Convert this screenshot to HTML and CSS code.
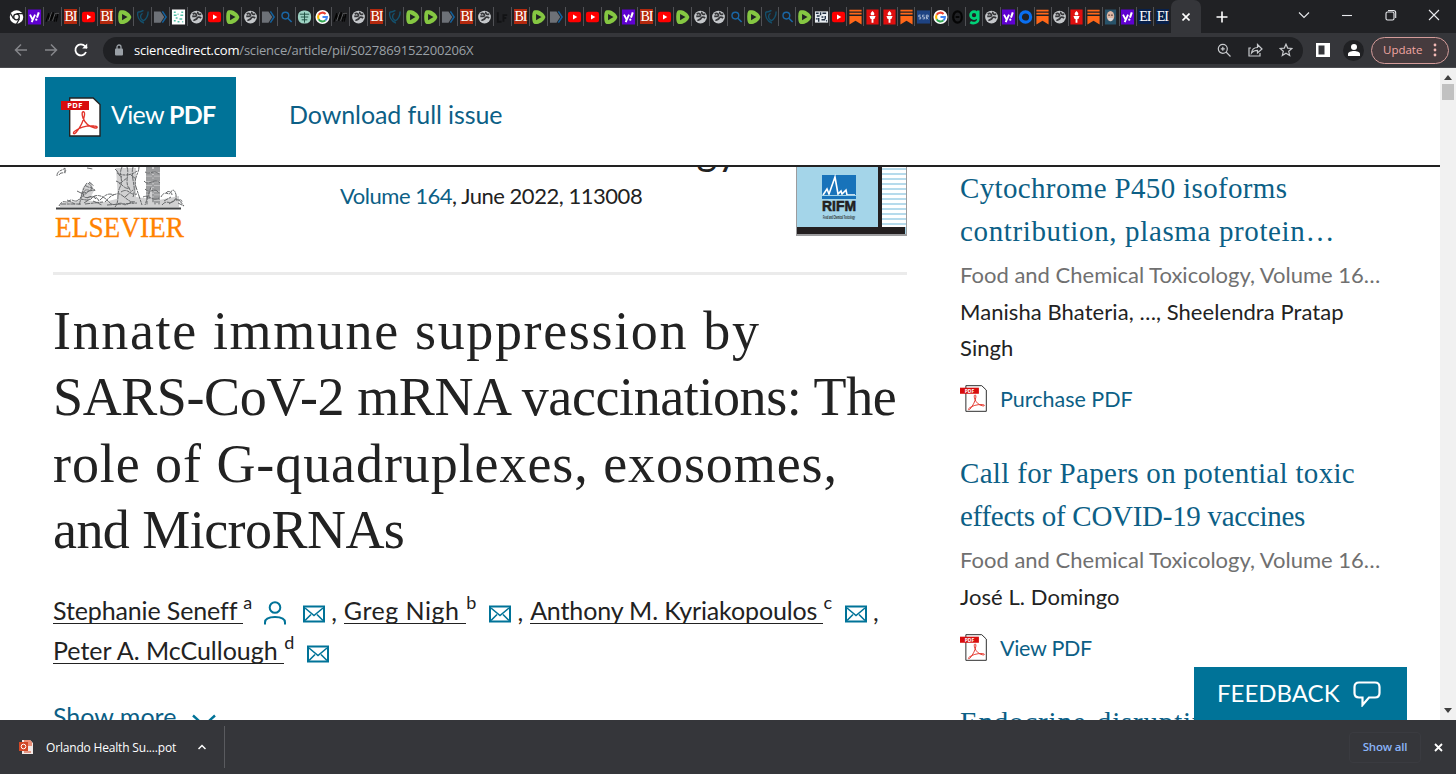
FILE: index.html
```html
<!DOCTYPE html>
<html lang="en">
<head>
  <meta charset="UTF-8" />
  <title>Innate immune suppression by SARS-CoV-2 mRNA vaccinations</title>
  <link rel="stylesheet" href="styles.css">
</head>
<body>
  <!-- shared icons -->
  <svg class="sprite" width="0" height="0">
    <symbol id="chrome" viewBox="0 0 16 16"><circle cx="8" cy="8" r="7.2" fill="#fff"/><circle cx="8" cy="8" r="3" fill="#fff" stroke="#202124" stroke-width="1.4"/><path d="M8 4.3h7M4.8 9.8L1.6 4.2M11.2 9.8L8 15.4" stroke="#202124" stroke-width="1.3"/></symbol>
    <symbol id="yahoo" viewBox="0 0 16 16"><rect x="1" width="14" height="16" fill="#5f01d1"/><path d="M3.2 5.5l2.600 5M8.600 5.5L5 13.4" stroke="#fff" stroke-width="2"/><path d="M12.600 3l-2 5.600" stroke="#fff" stroke-width="2.200"/><circle cx="9.900" cy="10.800" r="1.200" fill="#fff"/></symbol>
    <symbol id="script" viewBox="0 0 16 16"><path d="M1 13L4 4v7l3-8-1 9 3-9-1 9 4-9-2 5h4M11 8l-1 5M14 3l-2 10" fill="none" stroke="#050505" stroke-width="1.3"/><path d="M4 12l3-9M8 12l3-8h4" stroke="#77787b" stroke-width=".8" fill="none"/></symbol>
    <symbol id="youtube" viewBox="0 0 16 16"><rect x="1" y="2.5" width="14" height="11" rx="2.4" fill="#f00"/><path d="M6.4 5.4v5.2L11 8z" fill="#fff"/></symbol>
    <symbol id="rumble" viewBox="0 0 16 16"><path d="M4 .7h2.500c4 .5 8.300 4.300 8.800 7.300-.7 3.500-4.800 6.900-8.800 7.400H4C2 15.200 1.300 12 1.300 8S2 .9 4 .7z" fill="#85c742"/><path d="M5.400 4.800v6.600L11.200 8z" fill="#202124"/></symbol>
    <symbol id="shield" viewBox="0 0 16 16"><path d="M3 2.600c2 .4 4-.2 6-1.600M3 2.600C2 7 4 12 9.500 14.500M8 4c-3 2-3 6 1 8 3-2 5-5 5-10" fill="none" stroke="#14506c" stroke-width="1.500"/></symbol>
    <symbol id="arrow" viewBox="0 0 16 16"><path d="M1 2h7l4 6-4 6H1z" fill="#6d7177"/><path d="M10 2l4 6-4 6" fill="none" stroke="#12619e" stroke-width="1.600"/></symbol>
    <symbol id="dots" viewBox="0 0 16 16"><rect x="1" width="14" height="16" fill="#fff"/><path d="M3 3h2M7 5h1M11 3h2M3 6h3M10 6h3M5 9h2M9 10h3M3 12h2M7 13h2M12 13h1" stroke="#52bfa6" stroke-width="1.600"/></symbol>
    <symbol id="globe" viewBox="0 0 16 16"><circle cx="8" cy="8" r="6.800" fill="#c4c7ca"/><path d="M4 5c2-1.500 4-.5 4 1s-2 1.500-4.500 1.200M9.500 2.500c-1 2 1.500 3 3.500 2.500M13 9c-2-1.500-4-1-4.500.5s-3 1-3.500 2.500" fill="none" stroke="#36373a" stroke-width="1.900"/></symbol>
    <symbol id="search" viewBox="0 0 16 16"><circle cx="6.800" cy="6.500" r="3.600" fill="none" stroke="#1a66a5" stroke-width="1.500"/><path d="M9.500 9.300l4 4" stroke="#1a66a5" stroke-width="1.700"/></symbol>
    <symbol id="tree" viewBox="0 0 16 16"><rect x="1" y="1" width="14" height="14" rx="6" fill="#9ed4c4"/><path d="M8 3v11M3 5h10M4 8h8M5 11h6" stroke="#1d4d3e" stroke-width="1"/></symbol>
    <symbol id="google" viewBox="0 0 16 16"><circle cx="8" cy="8" r="7.500" fill="#fff"/><g fill="none" stroke-width="2.200"><path d="M3.900 5.700A4.700 4.700 0 0 1 11.300 4.700" stroke="#ea4335"/><path d="M3.900 5.700a4.700 4.700 0 0 0 0 4.600" stroke="#fbbc05"/><path d="M3.900 10.300a4.700 4.700 0 0 0 7.300 1.200" stroke="#34a853"/><path d="M11.200 11.500A4.700 4.700 0 0 0 12.700 8H8" stroke="#4285f4"/></g></symbol>
    <symbol id="dark" viewBox="0 0 16 16"><path d="M3 3v10h4M9 13V6h4M9 9h3" stroke="#121315" stroke-width="2" fill="none"/></symbol>
    <symbol id="grid" viewBox="0 0 16 16"><rect x="1" y="2" width="14" height="12" fill="#e8edf1"/><path d="M2 4h3M7 3v3M9 4h4M3 7h3M8 8h2M12 7v3M2 10h2M5 9v4M8 11h4M13 12h1" stroke="#202f42" stroke-width="1.500"/></symbol>
    <symbol id="substack" viewBox="0 0 16 16"><path d="M1.500 1.300h13M1.500 4.500h13" stroke="#ff6719" stroke-width="1.900"/><path d="M1.500 7h13v9L8 12l-6.500 4z" fill="#ff6719"/></symbol>
    <symbol id="torch" viewBox="0 0 16 16"><rect x="1.500" width="13" height="16" fill="#e00f0f"/><path d="M8 1.500c2 2 2.500 3 1.500 4.700h-3C5.500 4.500 6 3.500 8 1.500zM4.700 7h6.600L10 10H9v4H7v-4H6z" fill="#fff"/></symbol>
    <symbol id="ssr" viewBox="0 0 16 16"><rect x="1" y="1" width="14" height="14" fill="#1e4382"/><path d="M5 6H3v2h2v2H3M9 6H7v2h2v2H7M11 10.500V6h2v2h-2l2 2.500" fill="none" stroke="#c6d2e5" stroke-width=".8"/></symbol>
    <symbol id="theta" viewBox="0 0 16 16"><ellipse cx="8" cy="8" rx="4.600" ry="6" fill="none" stroke="#050505" stroke-width="2.400"/><path d="M6 8h4" stroke="#050505" stroke-width="2"/></symbol>
    <symbol id="gab" viewBox="0 0 16 16"><circle cx="7.500" cy="6" r="3.700" fill="none" stroke="#00d178" stroke-width="2.800"/><path d="M12 1v9.500c0 4-5.500 5-8.500 3" fill="none" stroke="#00d178" stroke-width="2.700"/></symbol>
    <symbol id="ring" viewBox="0 0 16 16"><circle cx="8" cy="8" r="5.500" fill="none" stroke="#0a6ff0" stroke-width="3.300"/></symbol>
    <symbol id="face" viewBox="0 0 16 16"><rect x="2" width="12" height="16" fill="#28536a"/><ellipse cx="8" cy="7" rx="4" ry="5.500" fill="#dcb6a4"/><path d="M5 9q3 7 6 0" fill="#d8d8d8"/><path d="M5.500 6h2M8.500 6h2" stroke="#3b2b26"/></symbol>
    <symbol id="pdf" viewBox="0 0 40 40"><path d="M8.700 1h23.500L39 7.500V39H8.700z" fill="#fff" stroke="#222" stroke-width="1.400"/><rect y="4" width="28" height="9" fill="#d80d0d"/><path d="M23 15c-2-1-2.500 2-1 6 2 5 6 9 12 10 3 .5 3-2-1-2-8-.5-15 2-19 5-3 2-1 4 1 1.500C19 31 23 23 23.500 18c.2-1.500 0-2.700-.5-3z" fill="none" stroke="#e3342b" stroke-width="1.400"/></symbol>
    <symbol id="mail" viewBox="0 0 22 18"><path d="M1 1.500h20v15H1z" fill="none" stroke="#007398" stroke-width="2"/><path d="M2 3l9 7.500L20 3M2 15.500l6-6M20 15.500l-6-6" fill="none" stroke="#007398" stroke-width="1.600"/></symbol>
  </svg>

  <div class="tab-strip">
    <div class="tabs" id="tabs"></div>
    <div class="tab-active"><svg width="8" height="8" viewBox="0 0 8 8"><path d="M.5.500l7 7M7.500.500l-7 7"/></svg></div>
    <svg class="new-tab" width="12" height="12" viewBox="0 0 12 12"><path d="M6 .5v11M.5 6h11"/></svg>
    <div class="window-buttons">
      <svg width="12" height="12" viewBox="0 0 12 12"><path d="M1 3.500l5 5 5-5"/></svg>
      <svg width="12" height="12" viewBox="0 0 12 12"><path d="M1 6.500h10"/></svg>
      <svg width="12" height="12" viewBox="0 0 12 12"><rect x="1" y="3" width="8" height="8" rx="1.500"/><path d="M3 1.500h5.500a2.200 2.200 0 0 1 2.200 2.200V9"/></svg>
      <svg width="12" height="12" viewBox="0 0 12 12"><path d="M1 1l10 10M11 1L1 11"/></svg>
    </div>
  </div>

  <div class="toolbar">
    <div class="nav-buttons">
      <svg class="dim" width="14" height="14" viewBox="0 0 14 14"><path d="M13 7H2M7 1.500L1.500 7 7 12.500"/></svg>
      <svg class="dim" width="14" height="14" viewBox="0 0 14 14"><path d="M1 7h11M7 1.500L12.500 7 7 12.500"/></svg>
      <svg class="reload" width="14" height="14" viewBox="0 0 14 14"><path d="M12 9A5.500 5.500 0 1 1 11 3.200L13 5"/><path d="M13.200.500v5H8.200z" fill="#fff" stroke="none"/></svg>
    </div>
    <div class="omnibox">
      <svg class="lock" width="10" height="12" viewBox="0 0 10 12"><rect x="1" y="4.500" width="8" height="7" rx="1" fill="#9aa0a6"/><path d="M3 5V3a2 2 0 0 1 4 0v2" fill="none" stroke="#9aa0a6" stroke-width="1.300"/></svg>
      <span class="url"><b>sciencedirect.com</b>/science/article/pii/S027869152200206X</span>
      <div class="omnibox-icons">
        <svg width="14" height="14" viewBox="0 0 14 14"><circle cx="5.800" cy="5.800" r="4.500"/><path d="M9 9l4.500 4.500M3.800 5.800h4M5.800 3.800v4"/></svg>
        <svg width="15" height="14" viewBox="0 0 15 14"><path d="M3 5H1v8h11v-3"/><path d="M3.500 10C4 6 6.500 4.500 9.500 4.500V1.500L14 6 9.500 10V7.300C7 7.300 5 8 3.500 10z"/></svg>
        <svg width="14" height="14" viewBox="0 0 14 14"><path d="M7 1.200l1.700 3.900 4.200.4-3.200 2.800 1 4.200L7 10.300l-3.700 2.200 1-4.200L1.100 5.500l4.200-.4z"/></svg>
      </div>
    </div>
    <svg class="side-panel" width="14" height="14" viewBox="0 0 14 14"><path d="M0 0h14v14H0zM2.500 2.500v9h6v-9z" fill="#fff" fill-rule="evenodd"/></svg>
    <div class="avatar"><svg width="14" height="14" viewBox="0 0 14 14"><circle cx="7" cy="4" r="3" fill="#fff"/><path d="M1 13V11c0-2 3-3 6-3s6 1 6 3v2z" fill="#fff"/></svg></div>
    <div class="update"><span>Update</span><svg width="4" height="14" viewBox="0 0 4 14" fill="#f2b8b5"><circle cx="2" cy="2" r="1.400"/><circle cx="2" cy="7" r="1.400"/><circle cx="2" cy="12" r="1.400"/></svg></div>
  </div>

  <div class="viewport">
    <div class="page">
      <div class="page-header">
        <a class="view-pdf"><div class="pdf-icon large"><svg width="40" height="40"><use href="#pdf"/></svg><em>PDF</em></div><span>View <b>PDF</b></span></a>
        <a class="download">Download full issue</a>
      </div>

      <div class="page-body">
        <article class="article">
          <div class="journal">
            <svg class="elsevier" width="132" height="74" viewBox="0 0 132 74">
              <g fill="#66686a" opacity=".3"><path d="M91 0h14v37H91zM61 1h20v32H63zM28 20l8-5 3 9-7 12-8-2zM5 36l22-3 22 2 25-6 30 4 20-4v11H5z"/></g>
              <g fill="none" stroke="#66686a" stroke-width="1" stroke-dasharray="5 .8 3 .6">
                <path d="M2 9c0-6 5-5 8-8M4 8c2-4 5 0 7-5M10 1v6M32 1l6 1"/>
                <path d="M67 0c-4 8 2 12-2 20s0 14-5 20M72 0c3 8-4 16 4 24M78 0c-3 10 4 20 0 30M84 0c0 6-6 12-3 20l6 18M62 6c5 3 14 3 20-2M61 14c6 2 8 9 14 7M66 25c8-5 8 4 16 2M60 2c4 3 3 7 7 8M64 17l8-6M70 30l8-7M76 8l5 4"/>
                <path d="M24 38c3-8 2-14 8-22 4 1 6 5 3 8-4-3-8 0-6 6 4 2 9-2 12 2M26 26c4 1 8-3 14-3M30 18c4 4 8 1 10 6M32 31c4-3 10-2 12 3M22 24l6 3M25 31l8-6M34 15l5 4M29 36l6-4"/>
                <path d="M4 39c4-8 7-2 10-5s6 2 9-1 10 3 14-2 12-2 17 4 10-1 14 2 8-4 12-2M50 35c4-5 9-9 15-8 5 3 8 7 14 9M45 33c6-6 9-7 14-5M6 37h20M30 37l18-2M52 38l30-2M12 33l8 4M38 34l9 4"/>
                <path d="M92 0v38M94 0v32M96 0v20l-6 18M98 2v34M100 0v38M102 0v36M104 0v38M90 5c6 3 8-3 14 2M89 14c5 6 10-4 16 2M90 22c6 6 9-3 14 4M88 30c6-3 9 5 16 1"/>
                <path d="M106 30c4-8 8 0 10-5s6 1 5 6 6-1 6 4M107 38c5-6 7 0 12-4s7 2 10 5M111 26c2-3 6-1 6 2M123 36l6 3M109 34l7-4M114 37l8-6"/>
              </g>
              <path d="M1 41.500h125" stroke="#3f4143" stroke-width="2"/>
              <text x="0" y="69.500" textLength="129" lengthAdjust="spacingAndGlyphs" font-family="Liberation Serif" font-size="30" fill="#ff8200" stroke="#ff8200" stroke-width=".3">ELSEVIER</text>
            </svg>
            <div class="issue">
              <div class="journal-name">gy</div>
              <div class="volume"><a>Volume 164</a>, June 2022, 113008</div>
            </div>
            <svg class="cover" width="111" height="70" viewBox="0 0 111 70">
              <rect width="111" height="70" fill="#9c9c9e"/>
              <rect x="1" width="109" height="68" fill="#a4d5e9"/>
              <path d="M86 0h24v61H86z" fill="#fff"/>
              <path d="M86 3h24M86 8h24M86 13h24M86 18h24M86 23h24M86 28h24M86 33h24M86 38h24M86 43h24M86 48h24M86 53h24M86 58h24" stroke="#9fd0e6" stroke-width="1.600"/>
              <path d="M82 0h4v61h-4zM1 61h108v7H1z" fill="#231f20"/>
              <rect x="26" y="9" width="34" height="24" fill="#1873ba"/>
              <path d="M27 29l4-6 2 5 6-17 3 17 3-3 1 3 4-4 1 5h8" fill="none" stroke="#fff" stroke-width="1.600"/>
              <path d="M26 29.500h34" stroke="#a4d5e9" stroke-width="1"/>
              <text x="26" y="45" textLength="34" lengthAdjust="spacingAndGlyphs" font-family="Liberation Sans" font-size="15.500" font-weight="bold" fill="#231f20" stroke="#231f20" stroke-width=".6">RIFM</text>
              <text x="27" y="53" textLength="32" lengthAdjust="spacingAndGlyphs" font-family="Liberation Sans" font-size="4.500" font-weight="bold" fill="#231f20">Food and Chemical Toxicology</text>
            </svg>
          </div>

          <h1>
            <span class="t1">Innate immune suppression by</span>
            <span class="t2">SARS-CoV-2 mRNA vaccinations: The</span>
            <span class="t3">role of G-quadruplexes, exosomes,</span>
            <span class="t4">and MicroRNAs</span>
          </h1>

          <div class="authors">
            <div class="author-line">
              <a class="a1">Stephanie Seneff&nbsp;</a><sup>a</sup>
              <svg class="person" width="22" height="24" viewBox="0 0 22 24"><circle cx="11" cy="6.500" r="5.300"/><path d="M1 23.500v-2c0-3.500 4-5.500 10-5.500s10 2 10 5.500v2"/></svg>
              <svg class="mail" width="22" height="18"><use href="#mail"/></svg><i>,</i>
              <a class="a2">Greg Nigh&nbsp;</a><sup>b</sup>
              <svg class="mail near" width="22" height="18"><use href="#mail"/></svg><i>,</i>
              <a class="a3">Anthony M. Kyriakopoulos&nbsp;</a><sup>c</sup>
              <svg class="mail near" width="22" height="18"><use href="#mail"/></svg><i>,</i>
            </div>
            <div class="author-line">
              <a class="a4">Peter A. McCullough&nbsp;</a><sup>d</sup>
              <svg class="mail near" width="22" height="18"><use href="#mail"/></svg>
            </div>
          </div>

          <a class="show-more"><span>Show more</span><svg width="24" height="14" viewBox="0 0 24 14"><path d="M1 1.500l11 10 11-10"/></svg></a>
        </article>

        <aside class="related">
          <div class="card">
            <h2><span class="h1a">Cytochrome P450 isoforms</span><span class="h1b">contribution, plasma protein…</span></h2>
            <p class="source">Food and Chemical Toxicology, Volume 16…</p>
            <p class="names"><span>Manisha Bhateria, …, Sheelendra Pratap</span><span>Singh</span></p>
            <a class="pdf-link"><div class="pdf-icon"><svg width="27" height="27"><use href="#pdf"/></svg><em>PDF</em></div><span>Purchase PDF</span></a>
          </div>
          <div class="card">
            <h2><span class="h2a">Call for Papers on potential toxic</span><span class="h2b">effects of COVID-19 vaccines</span></h2>
            <p class="source">Food and Chemical Toxicology, Volume 16…</p>
            <p class="names"><span>José L. Domingo</span></p>
            <a class="pdf-link view"><div class="pdf-icon"><svg width="27" height="27"><use href="#pdf"/></svg><em>PDF</em></div><span>View PDF</span></a>
          </div>
          <div class="card">
            <h2><span class="h3a">Endocrine-disrupting</span></h2>
          </div>
        </aside>
      </div>

      <button class="feedback"><span>FEEDBACK</span><svg width="28" height="26" viewBox="0 0 28 26"><path d="M6 1.500h16c3 0 4.500 1.500 4.500 4.500v6c0 3-1.500 4.500-4.500 4.500h-6L9.500 24v-7.500H6C3 16.500 1.500 15 1.500 12V6C1.500 3 3 1.500 6 1.500z"/></svg></button>
    </div>

    <div class="scrollbar">
      <svg width="8" height="5" viewBox="0 0 8 5"><path d="M0 5l4-5 4 5z"/></svg>
      <div class="thumb"></div>
      <svg class="down" width="8" height="5" viewBox="0 0 8 5"><path d="M0 0l4 5 4-5z"/></svg>
    </div>
  </div>

  <div class="downloads">
    <svg class="file-icon" width="14" height="16" viewBox="0 0 14 16"><path d="M3 1h8l3 3v11H3z" fill="#f3e9e6"/><path d="M5 1h6l2 2v4H5z" fill="#e98f78"/><rect y="3" width="9" height="9" fill="#d24726"/><circle cx="4.500" cy="7.500" r="2.300" fill="none" stroke="#fff"/><path d="M5 13h7" stroke="#d24726"/></svg>
    <span class="file-name">Orlando Health Su....pot</span>
    <svg class="caret" width="8" height="6" viewBox="0 0 8 6"><path d="M.5 5L4 1.500 7.500 5"/></svg>
    <div class="divider"></div>
    <button class="show-all">Show all</button>
    <svg class="close" width="9" height="9" viewBox="0 0 9 9"><path d="M1 1l7 7M8 1L1 8"/></svg>
  </div>

  <script>
    const wide = 'chrome yahoo script bi youtube bi rumble shield arrow dots globe youtube rumble globe arrow search tree google script globe bi shield rumble rumble arrow bi globe dark bi rumble arrow youtube youtube rumble yahoo bi youtube rumble globe globe'.split(' ');
    const narrow = 'search rumble shield search rumble grid youtube substack torch torch substack ssr google theta gab globe yahoo ring substack globe torch substack face yahoo ei ei'.split(' ');

    // these two favicons are plain letters
    const letters = { bi: 'BI', ei: 'EI' };

    function tab(icon, cls) {
      const inner = letters[icon]
        ? `<span class="fav ${icon}">${letters[icon]}</span>`
        : `<svg width="15" height="16"><use href="#${icon}"/></svg>`;
      return `<div class="tab ${cls}">${inner}</div>`;
    }

    document.getElementById('tabs').innerHTML =
      wide.map(i => tab(i, '')).join('') + narrow.map(i => tab(i, 'narrow')).join('');
  </script>
</body>
</html>
```

FILE: styles.css
```css
* {
  margin: 0;
  padding: 0;
  box-sizing: border-box;
}

body {
  width: 1456px;
  height: 774px;
  overflow: hidden;
  background: #fff;
  color: #222;
  font-family: Lato, sans-serif;
  display: flex;
  flex-direction: column;
}

svg {
  flex-shrink: 0;
}

.sprite {
  position: absolute;
}

/* browser chrome */
.tab-strip {
  height: 33px;
  background: #202124;
  display: flex;
  align-items: center;
  padding-left: 8px;
}

.tabs {
  display: flex;
}

.tab {
  width: 18px;
  height: 19px;
  border-right: 1px solid #505155;
  display: flex;
  align-items: center;
  justify-content: center;
}

.tab.narrow {
  width: 17.04px;
}

.tab:last-child {
  border-right: none;
}

.fav {
  width: 13px;
  height: 15px;
  color: #fff;
  font-family: "Liberation Serif", serif;
  font-size: 14px;
  line-height: 15px;
  letter-spacing: -1px;
  text-align: center;
}

.fav.bi {
  background: #b4290e;
}

.fav.ei {
  background: #08204a;
}

.tab-active {
  width: 30px;
  height: 33px;
  background: #35363a;
  border-radius: 7px 7px 0 0;
  display: flex;
  align-items: center;
  justify-content: center;
}

.tab-active svg, .new-tab {
  fill: none;
  stroke: #fff;
  stroke-width: 1.6;
}

.new-tab {
  margin-left: 15px;
}

.window-buttons {
  margin-left: auto;
  margin-right: 16px;
  display: flex;
  gap: 31.5px;
  margin-top: -4px;
}

.window-buttons svg {
  fill: none;
  stroke: #e8eaed;
  stroke-width: 1.1;
}

.toolbar {
  height: 35px;
  background: #35363a;
  border-bottom: 1px solid #4a4b4f;
  display: flex;
  align-items: center;
}

.nav-buttons {
  width: 103px;
  padding-left: 14px;
  display: flex;
  gap: 16px;
}

.nav-buttons svg {
  fill: none;
  stroke: #fff;
  stroke-width: 1.8;
}

.nav-buttons .dim {
  stroke: #85868a;
  stroke-width: 1.5;
}

.omnibox {
  width: 1200px;
  height: 27px;
  border-radius: 14px;
  background: #202124;
  display: flex;
  align-items: center;
  padding: 0 10px 0 11px;
}

.url {
  margin-left: 10px;
  font-family: "Open Sans", sans-serif;
  font-size: 13px;
  letter-spacing: -0.2px;
  color: #9aa0a6;
}

.url b {
  font-weight: normal;
  color: #fff;
}

.omnibox-icons {
  margin-left: auto;
  display: flex;
  gap: 16.5px;
}

.omnibox-icons svg {
  fill: none;
  stroke: #c8cacd;
  stroke-width: 1.2;
}

.side-panel {
  margin-left: 13px;
}

.avatar {
  width: 21px;
  height: 21px;
  margin-left: 13px;
  border-radius: 50%;
  background: #202124;
  display: flex;
  align-items: center;
  justify-content: center;
}

.update {
  width: 78px;
  height: 27px;
  margin-left: 7px;
  border: 1px solid #d49c9a;
  border-radius: 14px;
  background: #463b3e;
  color: #f2a7a3;
  font-family: "Open Sans", sans-serif;
  font-size: 11.5px;
  display: flex;
  align-items: center;
  justify-content: space-between;
  padding: 0 11px 2px 11px;
}

.update svg {
  margin-top: 2px;
}

/* page */
.viewport {
  height: 652px;
  display: flex;
}

.page {
  width: 1440px;
  height: 652px;
  overflow: hidden;
  position: relative;
}

a {
  color: #0c5f86;
}

.page-header {
  position: relative;
  z-index: 1;
  height: 99px;
  background: #fff;
  border-bottom: 2px solid #222;
  display: flex;
  align-items: center;
  padding-left: 45px;
}

.page-header .view-pdf {
  width: 191px;
  height: 80px;
  background: #007398;
  color: #fff;
  display: flex;
  align-items: center;
  padding-left: 16px;
  font-size: 25px;
  letter-spacing: -0.7px;
}

.view-pdf span {
  margin: -5px 0 0 10px;
}

.download {
  margin: -5px 0 0 53px;
  font-size: 25px;
  letter-spacing: -0.08px;
}

.pdf-icon {
  position: relative;
  display: flex;
}

/* label on the red ribbon */
.pdf-icon em {
  position: absolute;
  left: 0;
  top: 3px;
  width: 19px;
  color: #fff;
  font: bold 5px/6px "Open Sans", sans-serif;
  letter-spacing: 0;
  text-align: center;
}

.pdf-icon.large em {
  top: 4px;
  width: 28px;
  font-size: 7.5px;
  line-height: 9px;
  letter-spacing: 0.3px;
}

.page-body {
  display: flex;
  height: 553px;
  padding-left: 53px;
}

.article {
  width: 854px;
  flex-shrink: 0;
}

.journal {
  height: 108px;
  border-bottom: 3px solid #ebebeb;
  display: flex;
  align-items: flex-start;
}

.elsevier {
  margin-left: 2px;
}

.issue {
  flex: 1;
}

/* only the descenders show below the sticky header */
.journal-name {
  width: 551px;
  height: 8px;
  padding-bottom: 1px;
  font-size: 40px;
  display: flex;
  align-items: flex-end;
  justify-content: flex-end;
}

.volume {
  margin-left: 153px;
  font-size: 22px;
  letter-spacing: -0.47px;
  line-height: 30px;
  padding-top: 6px;
  white-space: nowrap;
}

.cover {
  margin-top: -1px;
}

h1 {
  margin-top: 23px;
  font-family: "Liberation Serif", serif;
  font-size: 54px;
  font-weight: normal;
  line-height: 66.4px;
}

h1 span, h2 span, .names span {
  display: block;
  white-space: nowrap;
}

.t1 { letter-spacing: 1.65px; }
.t2 { letter-spacing: -0.4px; }
.t3 { letter-spacing: 0.93px; }
.t4 { letter-spacing: -0.55px; }

.authors {
  margin-top: 27px;
  font-size: 25px;
}

.author-line {
  height: 40px;
  display: flex;
  align-items: center;
}

.author-line a {
  color: #222;
  white-space: nowrap;
  border-bottom: 1.5px solid #222;
  line-height: 26px;
}

.author-line .a1 { letter-spacing: -0.12px; }
.author-line .a2 { letter-spacing: 0.5px; }
.author-line .a3 { letter-spacing: -0.14px; }

.author-line sup {
  font-size: 18px;
  margin-top: -18px;
}

.author-line i {
  font-style: normal;
  margin: 0 7px 0 6px;
}

.person {
  margin: 5px 0 0 12px;
  fill: none;
  stroke: #007398;
  stroke-width: 2;
}

.mail {
  margin: 6px 0 0 17px;
}

.mail.near {
  margin-left: 13px;
}

.show-more {
  display: flex;
  margin-top: 30px;
  font-size: 25px;
}

.show-more svg {
  margin: 13px 0 0 16px;
  fill: none;
  stroke: #007398;
  stroke-width: 2.4;
}

.related {
  margin-left: 53px;
  width: 430px;
}

.card {
  margin-bottom: 40px;
}

h2 {
  font-family: "Liberation Serif", serif;
  font-size: 29px;
  font-weight: normal;
  line-height: 43px;
  color: #0c5f86;
}

.h1a { letter-spacing: 0.35px; }
.h1b { letter-spacing: 0.63px; }
.h2a { letter-spacing: 0.32px; }
.h2b { letter-spacing: -0.28px; }
.h3a { letter-spacing: 0.8px; }

.source {
  margin-top: 4px;
  font-size: 22px;
  line-height: 36px;
  color: #707070;
  white-space: nowrap;
}

.names {
  padding-top: 1px;
  font-size: 22px;
  letter-spacing: 0.06px;
  line-height: 36.4px;
}

.pdf-link {
  height: 27px;
  display: flex;
  align-items: center;
  margin-top: 18px;
  font-size: 21.5px;
}

.pdf-link.view {
  margin-top: 19px;
  letter-spacing: -0.3px;
}

.pdf-link span {
  margin: 1px 0 0 13px;
}

.feedback {
  position: absolute;
  left: 1194px;
  bottom: 0;
  width: 213px;
  height: 53px;
  border: none;
  background: #007398;
  color: #fff;
  font-family: Lato, sans-serif;
  font-size: 24px;
  display: flex;
  align-items: center;
  padding: 0 0 3px 23px;
}

.feedback svg {
  margin: 3px 0 0 13px;
  fill: none;
  stroke: #fff;
  stroke-width: 2.2;
}

.scrollbar {
  width: 16px;
  background: #f1f1f1;
  display: flex;
  flex-direction: column;
  align-items: center;
  padding: 7px 0;
}

.scrollbar svg {
  fill: #404040;
}

.thumb {
  width: 12px;
  height: 16px;
  margin-top: 4px;
  background: #c1c1c1;
}

.down {
  margin-top: auto;
}

/* download shelf */
.downloads {
  height: 54px;
  background: #35363a;
  display: flex;
  align-items: center;
  padding-left: 19px;
}

.file-name {
  margin-left: 13px;
  width: 152px;
  font-family: "Open Sans", sans-serif;
  font-size: 12px;
  letter-spacing: -0.18px;
  color: #fff;
}

.caret, .close {
  fill: none;
  stroke: #fff;
  stroke-width: 1.5;
}

.divider {
  width: 1px;
  height: 42px;
  margin-left: 18px;
  background: #5a5b5f;
}

.show-all {
  margin-left: auto;
  width: 72px;
  height: 31px;
  padding-bottom: 2px;
  border: 1px solid #3a3b40;
  border-radius: 4px;
  background: none;
  color: #8ab4f8;
  font-family: "Open Sans", sans-serif;
  font-size: 11.5px;
  font-weight: 600;
  letter-spacing: -0.2px;
}

.close {
  margin: 0 13px 0 13px;
  stroke-width: 1.8;
}
```
